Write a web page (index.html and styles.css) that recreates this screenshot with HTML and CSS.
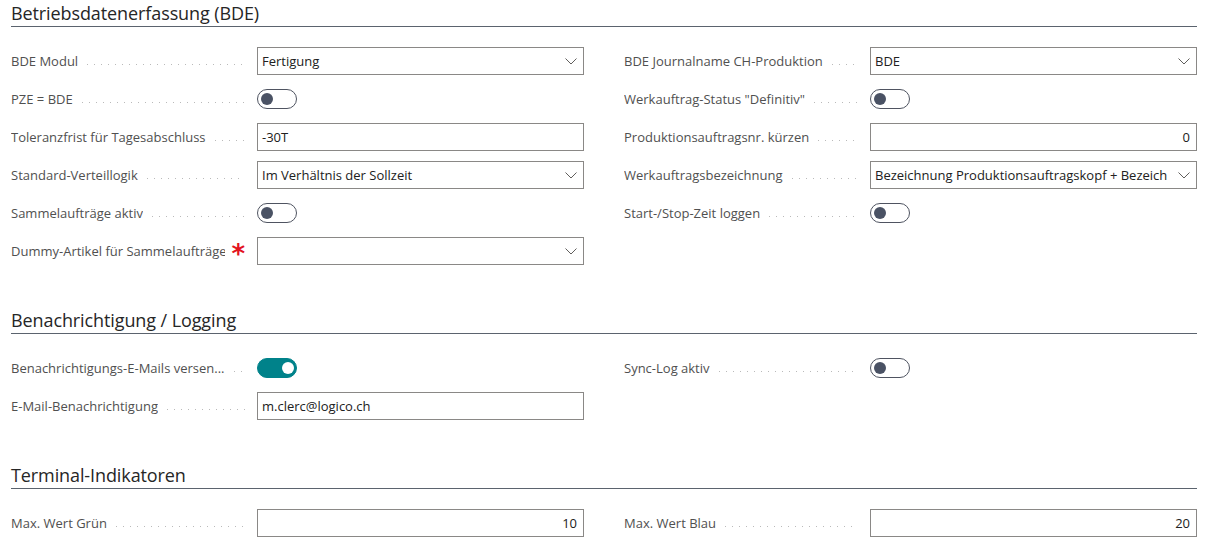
FILE: index.html
```html
<!DOCTYPE html>
<html lang="de">
<head>
    <meta charset="UTF-8">
    <meta name="viewport" content="width=device-width, initial-scale=1.0">
    <title>BDE Einrichtung</title>
    <link rel="stylesheet" href="styles.css">
</head>
<body>
    <!-- Betriebsdatenerfassung -->
    <section class="group">
        <h2 class="group-title">Betriebsdatenerfassung (BDE)</h2>
        <div class="fields">
            <div class="column">
                <div class="field">
                    <label class="caption"><span>BDE Modul</span></label>
                    <div class="select"><span>Fertigung</span><svg class="chevron" viewBox="0 0 12 7"><path d="M0.5 0.5 L6 6 L11.5 0.5"/></svg></div>
                </div>
                <div class="field">
                    <label class="caption"><span>PZE = BDE</span></label>
                    <div class="toggle"><span class="knob"></span></div>
                </div>
                <div class="field">
                    <label class="caption"><span>Toleranzfrist für Tagesabschluss</span></label>
                    <div class="input">-30T</div>
                </div>
                <div class="field">
                    <label class="caption"><span>Standard-Verteillogik</span></label>
                    <div class="select"><span>Im Verhältnis der Sollzeit</span><svg class="chevron" viewBox="0 0 12 7"><path d="M0.5 0.5 L6 6 L11.5 0.5"/></svg></div>
                </div>
                <div class="field">
                    <label class="caption"><span>Sammelaufträge aktiv</span></label>
                    <div class="toggle"><span class="knob"></span></div>
                </div>
                <div class="field">
                    <label class="caption required"><span>Dummy-Artikel für Sammelaufträge</span><b class="star">*</b></label>
                    <div class="select"><span></span><svg class="chevron" viewBox="0 0 12 7"><path d="M0.5 0.5 L6 6 L11.5 0.5"/></svg></div>
                </div>
            </div>
            <div class="column">
                <div class="field">
                    <label class="caption"><span>BDE Journalname CH-Produktion</span></label>
                    <div class="select"><span>BDE</span><svg class="chevron" viewBox="0 0 12 7"><path d="M0.5 0.5 L6 6 L11.5 0.5"/></svg></div>
                </div>
                <div class="field">
                    <label class="caption"><span>Werkauftrag-Status "Definitiv"</span></label>
                    <div class="toggle"><span class="knob"></span></div>
                </div>
                <div class="field">
                    <label class="caption"><span>Produktionsauftragsnr. kürzen</span></label>
                    <div class="input number">0</div>
                </div>
                <div class="field">
                    <label class="caption"><span>Werkauftragsbezeichnung</span></label>
                    <div class="select"><span>Bezeichnung Produktionsauftragskopf + Bezeich</span><svg class="chevron" viewBox="0 0 12 7"><path d="M0.5 0.5 L6 6 L11.5 0.5"/></svg></div>
                </div>
                <div class="field">
                    <label class="caption"><span>Start-/Stop-Zeit loggen</span></label>
                    <div class="toggle"><span class="knob"></span></div>
                </div>
            </div>
        </div>
    </section>

    <!-- Benachrichtigung -->
    <section class="group">
        <h2 class="group-title">Benachrichtigung / Logging</h2>
        <div class="fields">
            <div class="column">
                <div class="field">
                    <label class="caption"><span>Benachrichtigungs-E-Mails versen...</span></label>
                    <div class="toggle on"><span class="knob"></span></div>
                </div>
                <div class="field">
                    <label class="caption"><span>E-Mail-Benachrichtigung</span></label>
                    <div class="input">m.clerc@logico.ch</div>
                </div>
            </div>
            <div class="column">
                <div class="field">
                    <label class="caption"><span>Sync-Log aktiv</span></label>
                    <div class="toggle"><span class="knob"></span></div>
                </div>
            </div>
        </div>
    </section>

    <!-- Terminal -->
    <section class="group">
        <h2 class="group-title">Terminal-Indikatoren</h2>
        <div class="fields">
            <div class="column">
                <div class="field">
                    <label class="caption"><span>Max. Wert Grün</span></label>
                    <div class="input number">10</div>
                </div>
            </div>
            <div class="column">
                <div class="field">
                    <label class="caption"><span>Max. Wert Blau</span></label>
                    <div class="input number">20</div>
                </div>
            </div>
        </div>
    </section>
</body>
</html>
```

FILE: styles.css
```css
body {
    font-family: "Open Sans", "Noto Sans", sans-serif;
    font-size: 13px;
    color: #212121;
    margin: 0;
    padding: 0 15px 0 11px;
    background-color: white;
}

.group {
    margin-bottom: 42px;
}

.group-title {
    margin: 0;
    height: 26px;
    font-size: 18px;
    font-weight: 500;
    line-height: 26px;
    letter-spacing: -0.1px;
    border-bottom: 1px solid #5b636e;
    color: #262626;
}

.fields {
    display: grid;
    grid-template-columns: 573px 573px;
    column-gap: 40px;
    padding-top: 20px;
}

.column {
    display: flex;
    flex-direction: column;
    gap: 10px;
}

.field {
    display: flex;
    align-items: center;
    height: 28px;
}

.caption {
    display: flex;
    align-items: center;
    width: 234px;
    margin-right: 12px;
    color: #505050;
    white-space: nowrap;
    overflow: hidden;
}

.caption span {
    overflow: hidden;
}

/* Punktlinie zwischen Beschriftung und Feld */
.caption::after {
    content: "";
    flex: 1;
    min-width: 8px;
    height: 1px;
    margin: 6px 0 0 9px;
    background-image: linear-gradient(to right, #bababa 1px, transparent 1px);
    background-size: 7px 1px;
    background-repeat: repeat-x;
}

.caption.required {
    overflow: visible;
}

.caption.required::after {
    display: none;
}

.star {
    flex: 1;
    color: #e3141f;
    font-family: "DejaVu Sans", sans-serif;
    font-size: 26px;
    font-weight: bold;
    line-height: 20px;
    height: 20px;
    padding: 6px 0 0 6px;
}

.input,
.select {
    box-sizing: border-box;
    width: 327px;
    height: 28px;
    border: 1px solid #8a8886;
    padding: 0 6px 0 4px;
    display: flex;
    align-items: center;
    color: #212121;
    white-space: nowrap;
    overflow: hidden;
}

.input.number {
    justify-content: flex-end;
}

.select span {
    flex: 1;
    overflow: hidden;
}

.chevron {
    width: 12px;
    height: 7px;
    margin-left: 2px;
    flex: none;
    fill: none;
    stroke: #605e5c;
    stroke-width: 1;
}

.toggle {
    box-sizing: border-box;
    width: 40px;
    height: 20px;
    border: 1.5px solid #4f5461;
    border-radius: 10px;
    position: relative;
}

.knob {
    position: absolute;
    top: 2.5px;
    left: 2.5px;
    width: 12px;
    height: 12px;
    border-radius: 50%;
    background: #4a5264;
}

.toggle.on {
    background: #00828a;
    border-color: #00828a;
}

.toggle.on .knob {
    left: auto;
    right: 2.5px;
    background: white;
}
```
